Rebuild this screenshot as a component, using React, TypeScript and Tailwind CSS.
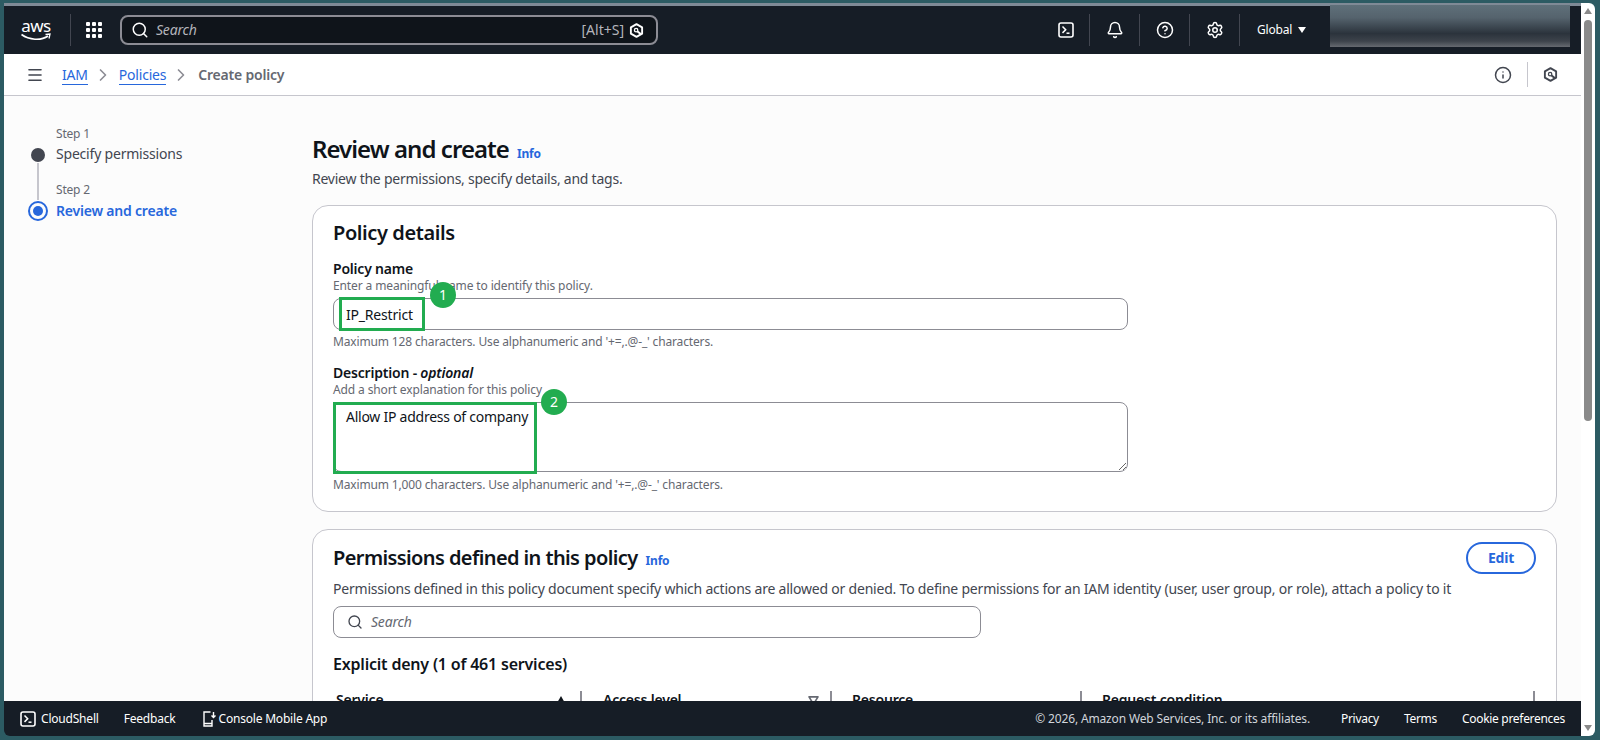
import { Bell, ChevronRight, CircleHelp, Info, Menu, Search, Settings } from "lucide-react";

function HexIcon({ className }: { className: string }) {
  return (
    <svg viewBox="0 0 16 16" className={className} fill="none" stroke="currentColor" strokeWidth="2">
      <path d="M8 1.2 14 4.6v6.8L8 14.8 2 11.4V4.6z" strokeLinejoin="round" />
      <circle cx="7.6" cy="7.6" r="1.8" strokeWidth="1.4" />
      <path d="M9.2 9.2 13 12" />
    </svg>
  );
}

function TerminalIcon({ className }: { className: string }) {
  return (
    <svg viewBox="0 0 16 16" className={className} fill="none" stroke="currentColor" strokeWidth="1.6">
      <rect x="1" y="1" width="14" height="14" rx="2" />
      <path d="m4.5 4.5 3.2 3.2-3.2 3.2" strokeWidth="1.5" />
      <path d="M8.5 11.2h3" strokeWidth="1.5" />
    </svg>
  );
}

function Grid() {
  return (
    <div className="grid h-4 w-4 grid-cols-3 gap-[2px]">
      {Array.from({ length: 9 }).map((_, i) => (
        <span key={i} className="rounded-[1px] bg-white" />
      ))}
    </div>
  );
}

function Divider() {
  return <div className="h-8 w-px bg-[#424650]" />;
}

function TopNav() {
  return (
    <div className="relative flex h-[48px] items-start bg-[#161d26] text-white">
      <div className="flex h-full items-center">
        <div className="ml-[17px] flex w-[30px] flex-col items-center">
          <span className="h-[14px] text-[17px] leading-[13px] tracking-[-0.5px]">aws</span>
          <svg viewBox="0 0 30 9" className="h-[9px] w-[30px]" fill="none" stroke="currentColor" strokeWidth="1.6">
            <path d="M0.5 1.5C8 7 20 8 27 3" />
            <path d="M24.5 1.5 29 1l-1 4.5" strokeWidth="1.3" />
          </svg>
        </div>
        <div className="ml-[19px] h-8 w-px bg-[#424650]" />
        <div className="ml-[15px]">
          <Grid />
        </div>
        <div className="ml-[18px] flex h-[30px] w-[538px] items-center rounded-lg border-2 border-[#8c8c94] bg-[#0f141a] pl-[9px] pr-[12px]">
          <Search className="h-[18px] w-[18px] text-white" strokeWidth={2} />
          <span className="ml-[7px] text-sm italic text-[#b4b4bb]">Search</span>
          <span className="ml-auto text-sm tracking-normal text-[#b4b4bb]">[Alt+S]</span>
          <HexIcon className="ml-[5px] h-[15px] w-[15px] text-white" />
        </div>
        <div className="ml-[400px] flex items-center">
          <TerminalIcon className="h-4 w-4 text-white" />
        </div>
        <div className="ml-[15px]">
          <Divider />
        </div>
        <Bell className="ml-[16px] h-[18px] w-[18px]" strokeWidth={2} />
        <div className="ml-[15px]">
          <Divider />
        </div>
        <CircleHelp className="ml-[16px] h-[18px] w-[18px]" strokeWidth={2} />
        <div className="ml-[15px]">
          <Divider />
        </div>
        <Settings className="ml-[16px] h-[18px] w-[18px]" strokeWidth={2} />
        <div className="ml-[15px]">
          <Divider />
        </div>
        <span className="ml-[17px] text-xs text-white">Global</span>
        <span className="ml-[6px] h-0 w-0 border-x-[4.5px] border-t-[6px] border-x-transparent border-t-white" />
      </div>
      <div className="ml-auto mr-[11px] mt-[-1px] h-[42px] w-[240px] bg-[linear-gradient(180deg,#5f707a_0%,#55636d_30%,#2b333c_68%,#3d434b_86%,#666a70_100%)]" />
    </div>
  );
}

function Crumbs() {
  return (
    <div className="flex h-[42px] shrink-0 items-center border-b border-[#c6c6cd] bg-white">
      <Menu className="ml-[22px] h-[18px] w-[18px] text-[#424650]" strokeWidth={2.2} />
      <a className="ml-[18px] border-b border-[#2767dc] text-sm leading-[19px] text-[#2767dc]">IAM</a>
      <ChevronRight className="ml-[5px] h-5 w-5 text-[#8c8c94]" strokeWidth={2} />
      <a className="ml-[6px] border-b border-[#2767dc] text-sm leading-[19px] text-[#2767dc]">Policies</a>
      <ChevronRight className="ml-[5px] h-5 w-5 text-[#8c8c94]" strokeWidth={2} />
      <span className="ml-[7px] text-sm font-semibold text-[#656871]">Create policy</span>
      <Info className="ml-auto h-[18px] w-[18px] text-[#424650]" strokeWidth={2} />
      <div className="ml-[15px] h-[25px] w-px bg-[#c6c6cd]" />
      <HexIcon className="ml-[15px] mr-[23px] h-[15px] w-[15px] text-[#424650]" />
    </div>
  );
}

function Sidebar() {
  return (
    <div className="flex w-[308px] shrink-0 pl-[24px] pt-[30px]">
      <div className="flex w-[20px] flex-col items-center pt-[22px]">
        <span className="h-[14px] w-[14px] rounded-full bg-[#424650]" />
        <span className="my-[1px] h-[37px] w-[2px] bg-[#c6c6cd]" />
        <span className="flex h-5 w-5 items-center justify-center rounded-full border-2 border-[#2767dc]">
          <span className="h-[10px] w-[10px] rounded-full bg-[#2767dc]" />
        </span>
      </div>
      <div className="ml-[8px]">
        <div className="text-xs leading-4 text-[#656871]">Step 1</div>
        <div className="mt-[2px] text-sm leading-5 text-[#424650]">Specify permissions</div>
        <div className="mt-[18px] text-xs leading-4 text-[#656871]">Step 2</div>
        <div className="mt-[3px] text-sm font-semibold leading-5 text-[#2767dc]">Review and create</div>
      </div>
    </div>
  );
}

function Annot({ n, className }: { n: string; className: string }) {
  return (
    <span className={`absolute flex h-[26px] w-[26px] items-center justify-center rounded-full bg-[#22ac50] text-sm text-white ${className}`}>
      {n}
    </span>
  );
}

function HeaderCell({ label, width, pad, children }: { label: string; width: string; pad: string; children?: React.ReactNode }) {
  return (
    <div className={`flex h-[30px] items-start justify-between border-r-2 border-[#8c8c94] ${width} ${pad}`}>
      <span className="mt-[-1px] text-sm font-semibold leading-5 text-[#0f141a]">{label}</span>
      {children}
    </div>
  );
}

function Content() {
  return (
    <div className="w-[1245px] shrink-0 pt-[38px]">
      <div className="flex items-baseline">
        <h1 className="text-2xl font-semibold leading-[30px] tracking-[-0.95px] text-[#0f141a]">Review and create</h1>
        <a className="ml-[8px] text-xs font-bold text-[#2767dc]">Info</a>
      </div>
      <p className="mt-[5px] text-sm leading-5 tracking-[-0.24px] text-[#424650]">Review the permissions, specify details, and tags.</p>

      <section className="mt-[16px] rounded-2xl border border-[#c6c6cd] bg-white px-[20px] pb-[18px] pt-[15px]">
        <h2 className="text-xl font-semibold leading-6 tracking-[-0.4px] text-[#0f141a]">Policy details</h2>
        <div className="mt-[15px] text-sm font-semibold leading-[18px] text-[#0f141a]">Policy name</div>
        <div className="text-xs leading-4 tracking-[-0.12px] text-[#656871]">Enter a meaningful name to identify this policy.</div>
        <div className="relative mt-[4px] w-[795px]">
          <input
            readOnly
            value="IP_Restrict"
            className="block h-[32px] w-full rounded-lg border border-[#8c8c94] bg-white px-[12px] text-sm text-[#0f141a] outline-none"
          />
          <span className="absolute left-[6px] top-[-1px] h-[34px] w-[86px] border-[3px] border-[#22ac50]" />
          <Annot n="1" className="left-[97px] top-[-16px]" />
        </div>
        <div className="mt-[4px] text-xs leading-4 tracking-[-0.15px] text-[#656871]">Maximum 128 characters. Use alphanumeric and '+=,.@-_' characters.</div>

        <div className="mt-[14px] text-sm font-semibold leading-[18px] text-[#0f141a]">
          Description - <em>optional</em>
        </div>
        <div className="text-xs leading-4 tracking-[-0.12px] text-[#656871]">Add a short explanation for this policy</div>
        <div className="relative mt-[4px] w-[795px]">
          <textarea
            readOnly
            value="Allow IP address of company"
            className="block h-[70px] w-full resize-y rounded-lg border border-[#8c8c94] bg-white px-[12px] py-[3px] text-sm leading-[22px] tracking-[-0.25px] text-[#0f141a] outline-none"
          />
          <span className="absolute left-0 top-0 h-[72px] w-[204px] border-[3px] border-[#22ac50]" />
          <Annot n="2" className="left-[208px] top-[-13px]" />
        </div>
        <div className="mt-[5px] text-xs leading-4 tracking-[-0.15px] text-[#656871]">Maximum 1,000 characters. Use alphanumeric and '+=,.@-_' characters.</div>
      </section>

      <section className="mt-[17px] rounded-2xl border border-[#c6c6cd] bg-white px-[20px] pt-[12px]">
        <div className="flex items-center justify-between pr-0">
          <div className="flex items-baseline">
            <h2 className="text-xl font-semibold leading-6 tracking-[-0.6px] text-[#0f141a]">Permissions defined in this policy</h2>
            <a className="ml-[8px] text-xs font-bold text-[#2767dc]">Info</a>
          </div>
          <button className="h-[32px] w-[70px] rounded-full border-2 border-[#2767dc] bg-white text-sm font-bold text-[#2767dc]">Edit</button>
        </div>
        <p className="mt-[5px] text-sm leading-5 tracking-[-0.21px] text-[#424650]">
          Permissions defined in this policy document specify which actions are allowed or denied. To define permissions for an IAM identity (user, user group, or role), attach a policy to it
        </p>
        <div className="mt-[7px] flex h-[32px] w-[648px] items-center rounded-lg border border-[#8c8c94] bg-white pl-[13px]">
          <Search className="h-4 w-4 text-[#424650]" strokeWidth={2} />
          <span className="ml-[8px] text-sm italic text-[#656871]">Search</span>
        </div>
        <h3 className="mt-[15px] text-base font-semibold leading-[22px] text-[#0f141a]">Explicit deny (1 of 461 services)</h3>
        <div className="mt-[16px] flex">
          <HeaderCell label="Service" width="w-[249px]" pad="pl-[3px] pr-[15px]">
            <span className="mt-[5px] h-0 w-0 border-x-[4px] border-b-[7px] border-x-transparent border-b-[#0f141a]" />
          </HeaderCell>
          <HeaderCell label="Access level" width="w-[250px]" pad="pl-[21px] pr-[11px]">
            <svg viewBox="0 0 12 10" className="mt-[5px] h-[9px] w-[11px] text-[#656871]" fill="none" stroke="currentColor" strokeWidth="1.8">
              <path d="M1 1h10L6 9z" strokeLinejoin="round" />
            </svg>
          </HeaderCell>
          <HeaderCell label="Resource" width="w-[250px]" pad="pl-[20px]" />
          <HeaderCell label="Request condition" width="w-[453px]" pad="pl-[20px]" />
        </div>
      </section>
    </div>
  );
}

function Footer() {
  return (
    <div className="flex h-[35px] shrink-0 items-center rounded-bl-md bg-[#161d26] text-xs text-white">
      <TerminalIcon className="ml-[16px] h-4 w-4" />
      <span className="ml-[5px]">CloudShell</span>
      <span className="ml-[25px]">Feedback</span>
      <svg viewBox="0 0 16 16" className="ml-[25px] h-4 w-4" fill="none" stroke="currentColor" strokeWidth="1.4">
        <path d="M9.5 1H3v14h8V9M3 12.5h8" />
        <path d="M12.5 1v5M10.5 4.5l2 2 2-2" />
      </svg>
      <span className="ml-[2px]">Console Mobile App</span>
      <span className="ml-auto tracking-[-0.15px] text-[#d1d5db]">© 2026, Amazon Web Services, Inc. or its affiliates.</span>
      <span className="ml-[31px] tracking-[-0.3px]">Privacy</span>
      <span className="ml-[25px] tracking-[-0.3px]">Terms</span>
      <span className="ml-[25px] mr-[16px] tracking-[-0.3px]">Cookie preferences</span>
    </div>
  );
}

function Scrollbar() {
  return (
    <div className="flex w-[14px] shrink-0 flex-col items-center rounded-r-md bg-white pb-[5px] pt-[5px]">
      <span className="h-0 w-0 border-x-[4px] border-b-[6px] border-x-transparent border-b-[#8a8a8a]" />
      <span className="mt-[6px] h-[401px] w-[8px] rounded-full bg-[#8a8a8a]" />
      <span className="mt-auto h-0 w-0 border-x-[4px] border-t-[6px] border-x-transparent border-t-[#8a8a8a]" />
    </div>
  );
}

export default function App() {
  return (
    <div className="flex h-[740px] w-[1600px] overflow-hidden bg-[#2c5b63] pb-[4px] pl-[4px] pr-[5px] pt-[3px] font-['Noto_Sans',sans-serif] tracking-[-0.2px]">
      <div className="flex min-w-0 flex-1 flex-col">
        <div className="h-[3px] shrink-0 bg-[#7f8a96]" />
        <TopNav />
        <Crumbs />
        <div className="flex min-h-0 flex-1 overflow-hidden bg-[#fcfcfc]">
          <Sidebar />
          <Content />
        </div>
        <Footer />
      </div>
      <Scrollbar />
    </div>
  );
}
